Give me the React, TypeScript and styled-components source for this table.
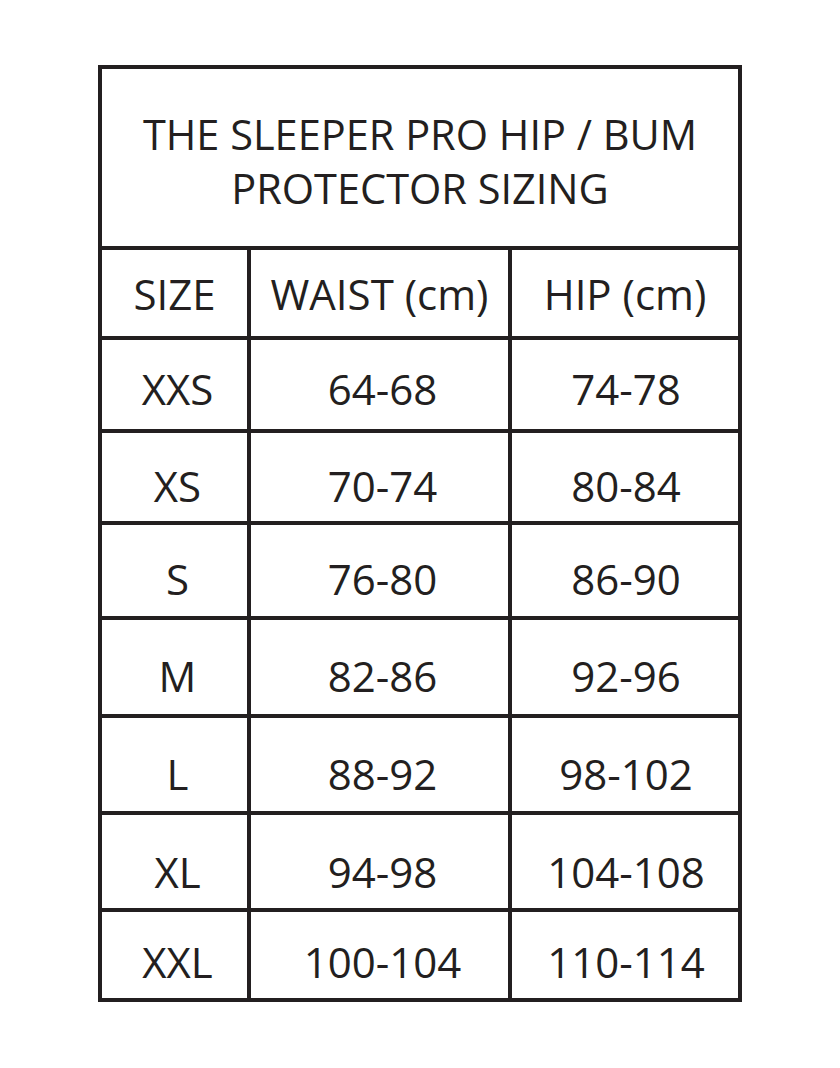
import { Fragment } from "react";
import styled, { createGlobalStyle } from "styled-components";

const INK = "#231f20";

// size, waist, hip, and how far the row's text sits below centre
const rows: Array<[string, string, string, number]> = [
  ["XXS", "64-68", "74-78", 4],
  ["XS", "70-74", "80-84", 9],
  ["S", "76-80", "86-90", 8],
  ["M", "82-86", "92-96", 9],
  ["L", "88-92", "98-102", 9],
  ["XL", "94-98", "104-108", 10],
  ["XXL", "100-104", "110-114", 7],
];

// row heights read off the chart, between the rule lines
const ROW_HEIGHTS = [177, 86, 89, 88, 91, 94, 93, 93, 86];

const GlobalStyle = createGlobalStyle`
  html, body {
    margin: 0;
    background: #ffffff;
  }
  body {
    font-family: "Open Sans", "Noto Sans", sans-serif;
    color: ${INK};
  }
`;

const Page = styled.div`
  width: 840px;
  height: 1068px;
  padding: 65px 0 0 98px;
  box-sizing: border-box;
`;

const Chart = styled.div`
  display: grid;
  grid-template-columns: 145px 257px 226px;
  grid-template-rows: ${ROW_HEIGHTS.map((h) => `${h}px`).join(" ")};
  gap: 4px;
  padding: 4px;
  width: max-content;
  background: ${INK};
`;

const Cell = styled.div<{ $drop?: number; $nudge?: number }>`
  background: #ffffff;
  display: flex;
  align-items: center;
  justify-content: center;
  font-size: 42px;
  line-height: 1;
  white-space: nowrap;
  padding-top: ${(p) => (p.$drop || 0) * 2}px;
  padding-left: ${(p) => (p.$nudge || 0) * 2}px;
`;

const Title = styled(Cell)`
  grid-column: 1 / span 3;
  flex-direction: column;
  text-align: center;
  font-size: 41.5px;
  line-height: 54px;
  padding-top: 6px;
`;

const App = () => {
  return (
    <Page>
      <GlobalStyle />
      <Chart>
        <Title>
          <span>THE SLEEPER PRO HIP / BUM</span>
          <span>PROTECTOR SIZING</span>
        </Title>
        <Cell $drop={1}>SIZE</Cell>
        <Cell $drop={1}>WAIST (cm)</Cell>
        <Cell $drop={1}>HIP (cm)</Cell>
        {rows.map(([size, waist, hip, drop]) => (
          <Fragment key={size}>
            <Cell $drop={drop} $nudge={3}>{size}</Cell>
            <Cell $drop={drop} $nudge={3}>{waist}</Cell>
            <Cell $drop={drop} $nudge={1}>{hip}</Cell>
          </Fragment>
        ))}
      </Chart>
    </Page>
  );
};

export default App;
